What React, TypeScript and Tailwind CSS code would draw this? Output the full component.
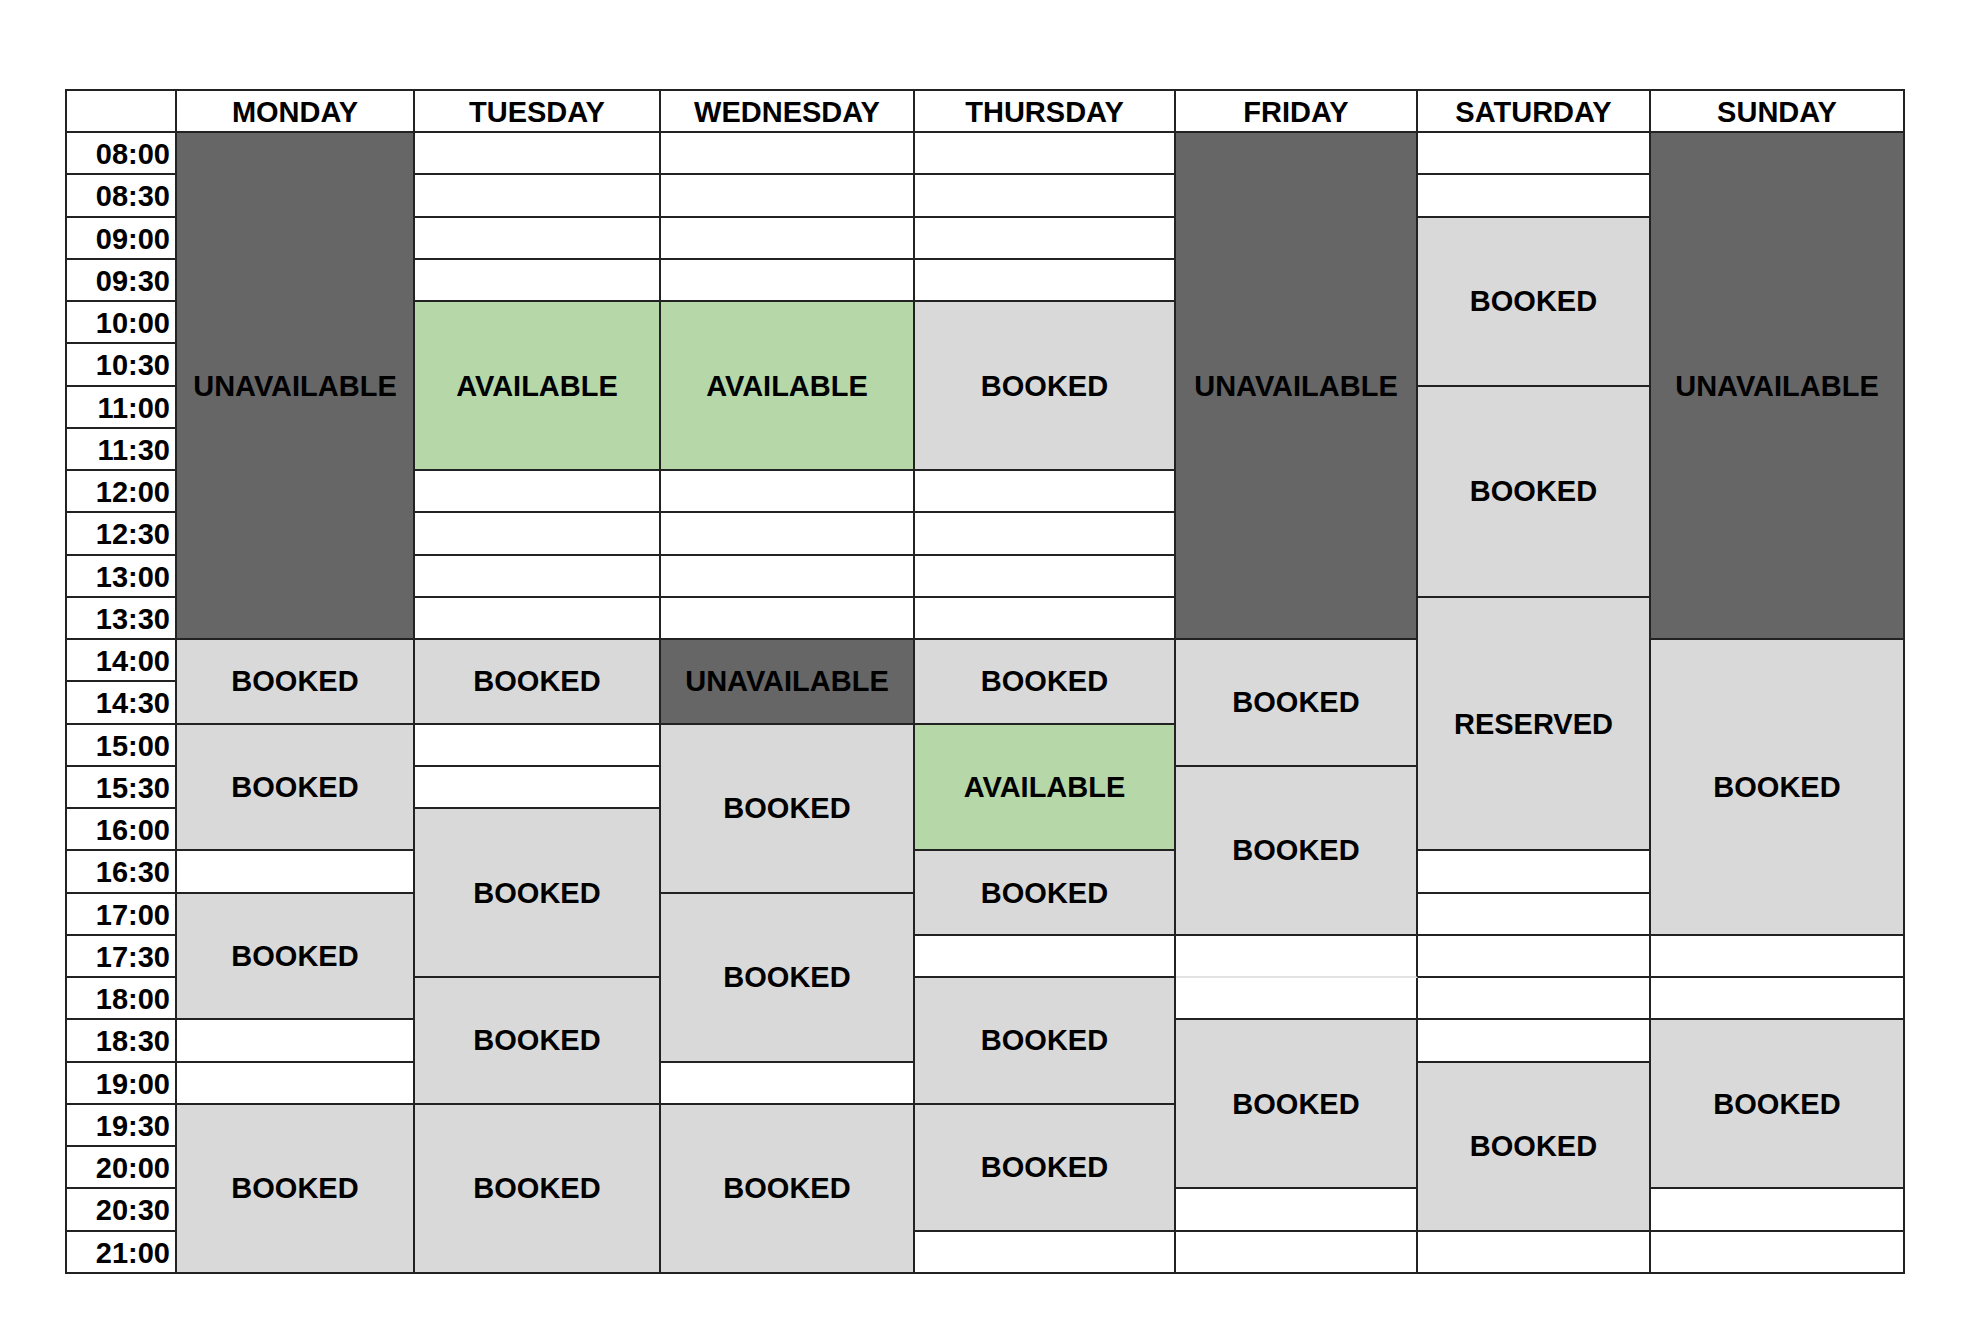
import React from 'react';

type Kind = 'empty' | 'booked' | 'unavailable' | 'available' | 'reserved';
type Block = [number, number, Kind];

const days = ['MONDAY', 'TUESDAY', 'WEDNESDAY', 'THURSDAY', 'FRIDAY', 'SATURDAY', 'SUNDAY'];

const times: string[] = [];
for (let h = 8; h <= 21; h++) {
  times.push(`${String(h).padStart(2, '0')}:00`);
  if (h < 21) times.push(`${String(h).padStart(2, '0')}:30`);
}

// [start row, span, kind]; rows not covered are empty half-hour slots
const schedule: Block[][] = [
  [[0, 12, 'unavailable'], [12, 2, 'booked'], [14, 3, 'booked'], [18, 3, 'booked'], [23, 4, 'booked']],
  [[4, 4, 'available'], [12, 2, 'booked'], [16, 4, 'booked'], [20, 3, 'booked'], [23, 4, 'booked']],
  [[4, 4, 'available'], [12, 2, 'unavailable'], [14, 4, 'booked'], [18, 4, 'booked'], [23, 4, 'booked']],
  [[4, 4, 'booked'], [12, 2, 'booked'], [14, 3, 'available'], [17, 2, 'booked'], [20, 3, 'booked'], [23, 3, 'booked']],
  [[0, 12, 'unavailable'], [12, 3, 'booked'], [15, 4, 'booked'], [21, 4, 'booked']],
  [[2, 4, 'booked'], [6, 5, 'booked'], [11, 6, 'reserved'], [22, 4, 'booked']],
  [[0, 12, 'unavailable'], [12, 7, 'booked'], [21, 4, 'booked']],
];

const styles: Record<Kind, string> = {
  empty: 'bg-white',
  booked: 'bg-[#d9d9d9]',
  unavailable: 'bg-[#666666]',
  available: 'bg-[#b6d7a8]',
  reserved: 'bg-[#d9d9d9]',
};

const labels: Record<Kind, string> = {
  empty: '',
  booked: 'BOOKED',
  unavailable: 'UNAVAILABLE',
  available: 'AVAILABLE',
  reserved: 'RESERVED',
};

const expand = (blocks: Block[]): Block[] => {
  const out: Block[] = [];
  let row = 0;
  for (const b of blocks) {
    while (row < b[0]) out.push([row++, 1, 'empty']);
    out.push(b);
    row = b[0] + b[1];
  }
  while (row < times.length) out.push([row++, 1, 'empty']);
  return out;
};

export default function App() {
  return (
    <div className="min-h-screen bg-white pt-[89px] pl-[65px]" style={{ fontFamily: '"Liberation Sans", Arial, sans-serif' }}>
      <div className="grid w-[1840px] grid-cols-[110px_238px_246px_254px_261px_242px_233px_254px] grid-rows-[42px_repeat(27,42.25px)] border-l-2 border-t-2 border-[#222] text-[29px] font-bold text-black">
        <div className="border-b-2 border-r-2 border-[#222] bg-white" />
        {days.map((d) => (
          <div key={d} className="flex items-center justify-center border-b-2 border-r-2 border-[#222] bg-white pt-[3px] leading-none">
            {d}
          </div>
        ))}

        {times.map((t, i) => (
          <div
            key={t}
            className="flex items-center justify-end border-b-2 border-r-2 border-[#222] bg-white pr-[5px] pt-[3px] leading-none"
            style={{ gridColumn: 1, gridRow: i + 2 }}
          >
            {t}
          </div>
        ))}

        {schedule.map((blocks, col) =>
          expand(blocks).map(([start, span, kind]) => {
            // Friday 17:30 / 18:00 split only by a faint line
            const faint = col === 4 && start === 19;
            return (
              <div
                key={`${col}-${start}`}
                className={`flex items-center justify-center border-b-2 border-r-2 pt-[1px] leading-none ${
                  faint ? 'border-b-[#e2e2e2] border-r-[#222]' : 'border-[#222]'
                } ${styles[kind]}`}
                style={{ gridColumn: col + 2, gridRow: `${start + 2} / span ${span}` }}
              >
                {labels[kind]}
              </div>
            );
          })
        )}
      </div>
    </div>
  );
}
